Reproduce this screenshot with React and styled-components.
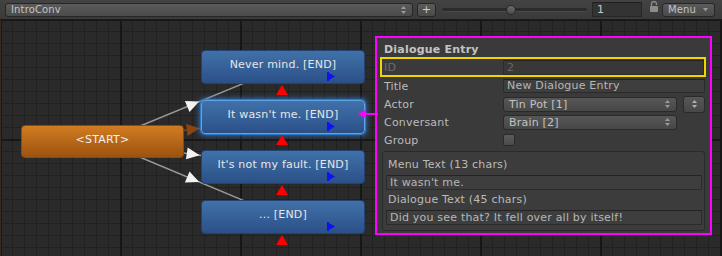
import React from "react";
import styled, { createGlobalStyle, css } from "styled-components";

const GlobalStyle = createGlobalStyle`
  html, body { margin: 0; padding: 0; background: #2a2a2a; }
  body { font-family: "DejaVu Sans", Verdana, sans-serif; }
  * { box-sizing: border-box; }
`;

const Frame = styled.div`
  width: 722px;
  height: 256px;
  display: flex;
  flex-direction: column;
  overflow: hidden;
`;

const Toolbar = styled.div`
  flex: none;
  height: 20px;
  display: flex;
  align-items: center;
  padding-left: 5px;
  background: linear-gradient(#434343, #3a3a3a);
  border-bottom: 1px solid #1b1b1b;
  color: #c4c4c4;
  font-size: 10px;
  letter-spacing: 0.15px;
`;

const ToolPopup = styled.div`
  width: ${(p) => p.$w}px;
  margin-left: ${(p) => p.$ml || 0}px;
  height: 14px;
  display: flex;
  align-items: center;
  justify-content: space-between;
  padding: 0 6px 0 5px;
  border: 1px solid #262626;
  border-radius: 3px;
  background: linear-gradient(#5b5b5b, #4a4a4a);
  line-height: 12px;
`;

const PlusButton = styled.div`
  width: 19px;
  height: 14px;
  margin-left: 4px;
  border: 1px solid #262626;
  border-radius: 3px;
  background: linear-gradient(#5b5b5b, #4a4a4a);
  display: flex;
  align-items: center;
  justify-content: center;
  font-size: 11px;
  color: #cfcfcf;
`;

const Slider = styled.div`
  width: 145px;
  height: 12px;
  margin-left: 6px;
  position: relative;
  display: flex;
  align-items: center;
`;

const Track = styled.div`
  width: 100%;
  height: 4px;
  border-radius: 2px;
  background: #2b2b2b;
  border-bottom: 1px solid #4a4a4a;
`;

const Thumb = styled.div`
  position: absolute;
  top: 1px;
  width: 10px;
  height: 10px;
  border-radius: 50%;
  border: 1px solid #262626;
  background: linear-gradient(#6c6c6c, #4c4c4c);
`;

const NumberField = styled.div`
  width: 50px;
  height: 15px;
  margin-left: 5px;
  padding-left: 4px;
  background: #333333;
  border: 1px solid #262626;
  border-top-color: #1e1e1e;
  font-size: 11px;
  line-height: 13px;
  color: #c8c8c8;
`;

const LockBox = styled.div`
  margin-left: 8px;
  width: 8px;
  height: 18px;
  display: flex;
  align-items: flex-start;
`;

const Canvas = styled.div`
  flex: 1;
  position: relative;
  background-color: #2a2a2a;
  border-left: 1px solid #3a2a20;
  background-image: linear-gradient(to right, #171717 2px, transparent 2px),
    linear-gradient(to bottom, #171717 2px, transparent 2px),
    linear-gradient(to right, #212121 1px, transparent 1px),
    linear-gradient(to bottom, #212121 1px, transparent 1px);
  background-size: 120px 120px, 120px 120px, 12px 12px, 12px 12px;
  background-position: -1px -1px;
`;

const Links = styled.svg`
  position: absolute;
  left: -1px;
  top: 0;
  width: 100%;
  height: 100%;
`;

const Node = styled.div`
  position: absolute;
  left: ${(p) => p.$x}px;
  top: ${(p) => p.$y}px;
  width: ${(p) => p.$w}px;
  height: ${(p) => p.$h}px;
  border-radius: 4px;
  padding-top: 7px;
  line-height: 14px;
  font-size: 11px;
  letter-spacing: 0.2px;
  text-align: center;
  color: #e6e6e6;
  border: 1px solid #24426f;
  background: linear-gradient(#4171a9, #2b5088);
  ${(p) =>
    p.$start &&
    css`
      border-color: #8a4a10;
      background: linear-gradient(#d27c22, #9c5210);
      color: #f2f2f2;
    `}
  ${(p) =>
    p.$selected &&
    css`
      border-color: #5aa4ea;
      box-shadow: 0 0 0 1px #2f78c4, 0 0 5px 2px rgba(50, 130, 220, 0.7);
    `}
`;

const InPort = styled.div`
  position: absolute;
  left: 74px;
  top: calc(100% + 2px);
  width: 0;
  height: 0;
  border-left: 6px solid transparent;
  border-right: 6px solid transparent;
  border-bottom: 10px solid #ff0000;
`;

const OutFlag = styled.svg`
  position: absolute;
  left: 125px;
  top: 21px;
`;

const Inspector = styled.div`
  position: absolute;
  left: 374px;
  top: 16px;
  width: 337px;
  height: 199px;
  border: 2px solid #ff00ff;
  background: #3a3a3a;
  display: flex;
  flex-direction: column;
  color: #bababa;
  font-size: 11px;
  letter-spacing: 0.2px;
`;

const Pointer = styled.svg`
  position: absolute;
  left: -19px;
  top: 71px;
`;

const Header = styled.div`
  height: 19px;
  padding: 5px 0 0 7px;
  line-height: 14px;
  font-weight: bold;
  color: #c4c4c4;
`;

const IdBox = styled.div`
  height: 20px;
  margin: 0 4px 0 3px;
  border: 2px solid #f2d400;
  display: grid;
  grid-template-columns: 119px 1fr;
  align-items: center;
  padding-left: 2px;
  color: #6c6c6c;
`;

const Row = styled.div`
  height: 18px;
  display: grid;
  grid-template-columns: 119px 1fr;
  align-items: center;
  padding: 0 5px 0 7px;
`;

const ValueCell = styled.div`
  display: flex;
  align-items: center;
  gap: 6px;
  padding-right: ${(p) => p.$right || 0}px;
`;

const Field = styled.div`
  height: ${(p) => p.$h || 15}px;
  padding-left: 3px;
  line-height: ${(p) => (p.$h || 15) - 2}px;
  background: ${(p) => (p.$disabled ? "#383838" : "#3e3e3e")};
  border: 1px solid #2b2b2b;
  border-top-color: #232323;
  color: ${(p) => (p.$disabled ? "#686868" : "#b6b6b6")};
  white-space: nowrap;
  overflow: hidden;
`;

const Popup = styled.div`
  flex: 1;
  height: 15px;
  display: flex;
  align-items: center;
  justify-content: space-between;
  padding: 0 6px 0 5px;
  border: 1px solid #2a2a2a;
  border-radius: 3px;
  background: linear-gradient(#575757, #474747);
  color: #c2c2c2;
  line-height: 13px;
`;

const IconButton = styled.div`
  width: 22px;
  height: 17px;
  border: 1px solid #2a2a2a;
  border-radius: 3px;
  background: linear-gradient(#575757, #474747);
  display: flex;
  align-items: center;
  justify-content: center;
`;

const Checkbox = styled.div`
  width: 12px;
  height: 12px;
  border: 1px solid #2a2a2a;
  border-radius: 2px;
  background: linear-gradient(#5c5c5c, #4a4a4a);
`;

const SubPanel = styled.div`
  height: 80px;
  margin: 2px 5px 0 5px;
  padding: 3px 2px 0 3px;
  border: 1px solid #2a2a2a;
  border-radius: 3px;
  background: #3c3c3c;
  display: flex;
  flex-direction: column;
`;

const SubLabel = styled.div`
  height: 20px;
  line-height: 20px;
  padding-left: 2px;
`;

const UpDown = ({ color = "#9a9a9a" }) => (
  <svg width="5" height="8" viewBox="0 0 5 8">
    <polygon points="2.5,0 5,3 0,3" fill={color} />
    <polygon points="0,5 5,5 2.5,8" fill={color} />
  </svg>
);

const DownArrow = () => (
  <svg width="5" height="4" viewBox="0 0 5 4">
    <polygon points="0,0 5,0 2.5,3.5" fill="#9a9a9a" />
  </svg>
);

const Lock = () => (
  <svg width="8" height="11" viewBox="0 0 8 11">
    <path d="M1.5 5.5 V3 a2.5 2.5 0 0 1 5 0 V4" fill="none" stroke="#8c8c8c" strokeWidth="1.3" />
    <rect x="0" y="5" width="8" height="6" rx="1" fill="#8c8c8c" />
  </svg>
);

const nodes = [
  { id: 1, title: "Never mind. [END]", y: 30 },
  { id: 2, title: "It wasn't me. [END]", y: 80, selected: true, link: "#8b4513" },
  { id: 3, title: "It's not my fault. [END]", y: 130 },
  { id: 4, title: "... [END]", y: 180 },
];

const start = { x: 102.5, y: 121.5 };

const Arrow = ({ from, to, color, line }) => {
  const mx = (from.x + to.x) / 2;
  const my = (from.y + to.y) / 2;
  const angle = (Math.atan2(to.y - from.y, to.x - from.x) * 180) / Math.PI;
  return (
    <g>
      <line x1={from.x} y1={from.y} x2={to.x} y2={to.y} stroke={line} strokeWidth="1.4" />
      <polygon
        points="7,0 -6,-6 -6,6"
        fill={color}
        transform={`translate(${mx} ${my}) rotate(${angle})`}
      />
    </g>
  );
};

export default function App() {
  const sliderValue = 0.476;
  return (
    <>
      <GlobalStyle />
      <Frame>
        <Toolbar>
          <ToolPopup $w={408}>
            <span>IntroConv</span>
            <UpDown />
          </ToolPopup>
          <PlusButton>+</PlusButton>
          <Slider>
            <Track />
            <Thumb style={{ left: `${sliderValue * 145 - 5}px` }} />
          </Slider>
          <NumberField>1</NumberField>
          <LockBox>
            <Lock />
          </LockBox>
          <ToolPopup $w={53} $ml={4}>
            <span>Menu</span>
            <DownArrow />
          </ToolPopup>
        </Toolbar>
        <Canvas>
          <Links>
            {nodes.map((n) => (
              <Arrow
                key={n.id}
                from={start}
                to={{ x: 283, y: n.y + 17 }}
                color={n.link || "#f2f2f2"}
                line={n.link || "#9a9a9a"}
              />
            ))}
          </Links>
          <Node $start $x={20} $y={105} $w={163} $h={33}>
            &lt;START&gt;
          </Node>
          {nodes.map((n) => (
            <Node key={n.id} $x={200} $y={n.y} $w={164} $h={34} $selected={n.selected}>
              {n.title}
              <OutFlag width="8" height="9" viewBox="0 0 8 9">
                <rect x="0" y="0" width="2" height="9" fill="#1010f0" />
                <polygon points="2,1 8,4.5 2,8" fill="#1010f0" />
              </OutFlag>
              <InPort />
            </Node>
          ))}
          <Inspector>
            <Pointer width="20" height="10" viewBox="0 0 20 10">
              <polygon points="0,5 8,0.5 8,9.5" fill="#ff00ff" />
              <rect x="7" y="4" width="13" height="2" fill="#ff00ff" />
            </Pointer>
            <Header>Dialogue Entry</Header>
            <IdBox>
              <span>ID</span>
              <Field $disabled $h={15}>2</Field>
            </IdBox>
            <Row>
              <span>Title</span>
              <Field $h={14}>New Dialogue Entry</Field>
            </Row>
            <Row>
              <span>Actor</span>
              <ValueCell>
                <Popup>
                  <span>Tin Pot [1]</span>
                  <UpDown />
                </Popup>
                <IconButton>
                  <UpDown color="#b0b0b0" />
                </IconButton>
              </ValueCell>
            </Row>
            <Row>
              <span>Conversant</span>
              <ValueCell $right={28}>
                <Popup>
                  <span>Brain [2]</span>
                  <UpDown />
                </Popup>
              </ValueCell>
            </Row>
            <Row>
              <span>Group</span>
              <ValueCell>
                <Checkbox />
              </ValueCell>
            </Row>
            <SubPanel>
              <SubLabel>Menu Text (13 chars)</SubLabel>
              <Field>It wasn't me.</Field>
              <SubLabel>Dialogue Text (45 chars)</SubLabel>
              <Field>Did you see that? It fell over all by itself!</Field>
            </SubPanel>
          </Inspector>
        </Canvas>
      </Frame>
    </>
  );
}
